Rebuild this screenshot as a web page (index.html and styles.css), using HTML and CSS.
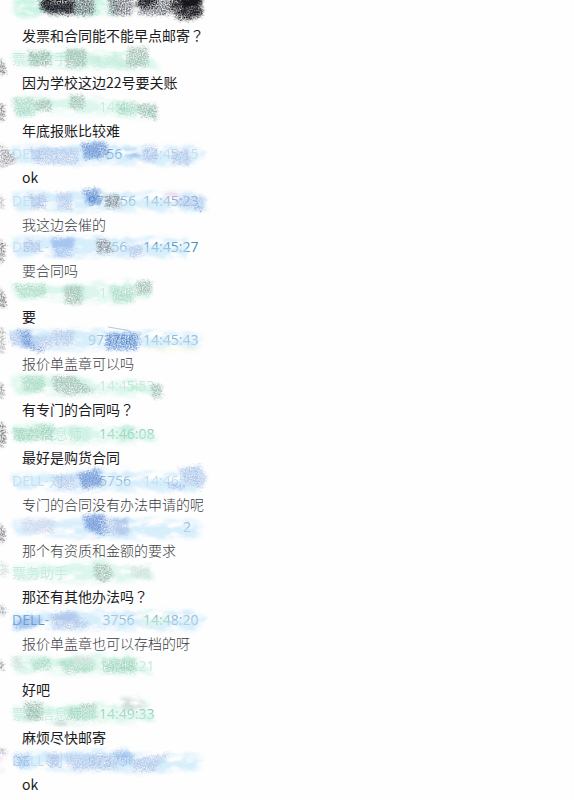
FILE: index.html
```html
<!DOCTYPE html>
<html lang="zh-CN">
<head>
<meta charset="utf-8">
<meta name="viewport" content="width=device-width, initial-scale=1">
<title>聊天记录</title>
<link rel="stylesheet" href="styles.css">
</head>
<body>
<svg class="defs" aria-hidden="true">
  <defs>
    <filter id="wash" x="-10%" y="-30%" width="120%" height="160%" color-interpolation-filters="sRGB">
      <feTurbulence type="fractalNoise" baseFrequency=".06 .12" numOctaves="3" seed="4" result="n"/>
      <feGaussianBlur in="SourceGraphic" stdDeviation="2" result="s"/>
      <feDisplacementMap in="s" in2="n" scale="8" xChannelSelector="R" yChannelSelector="G" result="d"/>
      <feColorMatrix in="n" type="matrix" values="0 0 0 0 0  0 0 0 0 0  0 0 0 0 0  0 0 3 0 -.7" result="a"/>
      <feComposite in="d" in2="a" operator="in"/>
    </filter>
    <filter id="grain" x="-10%" y="-30%" width="120%" height="160%" color-interpolation-filters="sRGB">
      <feTurbulence type="fractalNoise" baseFrequency=".3 .5" numOctaves="2" seed="9" result="n"/>
      <feGaussianBlur in="SourceGraphic" stdDeviation="1.6" result="s"/>
      <feDisplacementMap in="s" in2="n" scale="7" xChannelSelector="R" yChannelSelector="G" result="d"/>
      <feTurbulence type="fractalNoise" baseFrequency=".75" numOctaves="2" seed="3" result="t"/>
      <feColorMatrix in="t" type="matrix" values="0 0 0 0 0  0 0 0 0 0  0 0 0 0 0  2 0 0 0 -.4" result="a"/>
      <feComposite in="d" in2="a" operator="in"/>
    </filter>
  </defs>
</svg>
<main class="log">
  <article class="entry">
    <header class="meta">
      <svg class="smudge dark" viewBox="0 0 210 32" aria-hidden="true">
        <g filter="url(#wash)"><path class="mint" d="M14 2H118V20H14z"/><path class="gray" d="M42 0H72V17H42zM134 0H158V13H134z"/><path class="ink" d="M174 0H200V19H184L172 10z"/></g>
        <g filter="url(#grain)"><path class="gray" d="M74 0H94V19H58zM108 0H132V19H110zM150 0H171V19H138z"/><path class="ink" d="M40 0H74V18H52L40 12zM133 0H157V12H140zM170 0H202V20L190 24H178L170 12z"/></g>
      </svg>
    </header>
    <p class="text">发票和合同能不能早点邮寄<span class="mark" lang="zh-TW">？</span></p>
  </article>
  <article class="entry">
    <header class="meta green">
      <svg class="smudge" viewBox="0 0 210 32" aria-hidden="true">
        <g filter="url(#wash)"><path class="mint" d="M12 9H148L160 24 152 28 30 23 12 20z"/><path class="aqua" d="M64 7H86V25H66zM92 11H122V24H94z"/></g>
        <g filter="url(#grain)"><path class="moss" d="M28 8H50V23H30zM66 6H86V24H66zM128 4H148V24H126z"/><path class="aqua" d="M88 14H126V24H92z"/><path class="ink" d="M0 14L4 22 6 31 0 32z"/></g>
      </svg>
      <span class="name faint">票务信手</span>
    </header>
    <p class="text">因为学校这边22号要关账</p>
  </article>
  <article class="entry spaced">
    <header class="meta green">
      <svg class="smudge" viewBox="0 0 210 32" aria-hidden="true">
        <g filter="url(#wash)"><path class="mint" d="M14 6H54L84 7 138 12 156 16V28L118 25 54 22 16 26z"/></g>
        <g filter="url(#grain)"><path class="jade" d="M12 7H34V25H16zM116 11H136V24H118z"/><path class="moss" d="M34 9H51V20H36zM70 4H84V18H70zM136 13H157V29L140 25z"/><path class="ink" d="M0 13H4V30H0z"/></g>
      </svg>
      <span class="name"></span><time class="faint">14:4</time>
    </header>
    <p class="text">年底报账比较难</p>
  </article>
  <article class="entry">
    <header class="meta blue">
      <svg class="smudge" viewBox="0 0 210 32" aria-hidden="true">
        <g filter="url(#wash)"><path class="sky" d="M10 8H80L108 4 130 8H196L206 18 188 27 60 26 12 24z"/><path class="azure" d="M84 5H106V19H84zM126 12H140V21H126z"/></g>
        <g filter="url(#grain)"><path class="blue" d="M80 5H107L109 19 86 22z"/><path class="peri" d="M30 10H78V26H34zM143 8H157V24H143zM170 12H190V27H172z"/><path class="gray" d="M0 6L12 15 16 24 0 30z"/></g>
      </svg>
      <span class="name faint">DELL-</span><span class="ident strong">&nbsp;&nbsp;&nbsp;&nbsp;&nbsp;56</span><time class="faint">14:45:15</time>
    </header>
    <p class="text">ok</p>
  </article>
  <article class="entry song">
    <header class="meta blue">
      <svg class="smudge" viewBox="0 0 210 32" aria-hidden="true">
        <g filter="url(#wash)"><path class="sky" d="M12 7H190L206 12V26H14z"/><path class="rose" d="M166 5H180V18H166z"/><path class="azure" d="M84 6H100V19H88z"/></g>
        <g filter="url(#grain)"><path class="blue" d="M82 4H98L102 17 88 20zM192 14H203V25H196z"/><path class="peri" d="M28 9H46V24H32zM56 8H72V25H58zM176 11H204V22H180z"/><path class="gray" d="M104 10H120V23H106zM0 11H3V24H0z"/></g>
      </svg>
      <span class="name faint">DELL-</span><span class="ident">973756</span><time>14:45:23</time>
    </header>
    <p class="text">我这边会催的</p>
  </article>
  <article class="entry song">
    <header class="meta blue">
      <svg class="smudge" viewBox="0 0 210 32" aria-hidden="true">
        <g filter="url(#wash)"><path class="sky" d="M12 6H160L188 8V26H14z"/><path class="azure" d="M52 7H72V24H56z"/></g>
        <g filter="url(#grain)"><path class="azure" d="M50 6H74V24L56 26z"/><path class="gray" d="M96 8H108L114 22 98 22z"/><path class="ink" d="M0 9L5 12 3 32 0 32z"/><path class="peri" d="M24 9H40V21H24zM126 14H142V26H130z"/></g>
      </svg>
      <span class="name faint">DELL-</span><span class="ident">&nbsp;&nbsp;3756</span><time class="strong">14:45:27</time>
    </header>
    <p class="text">要合同吗</p>
  </article>
  <article class="entry">
    <header class="meta green">
      <svg class="smudge" viewBox="0 0 210 32" aria-hidden="true">
        <g filter="url(#wash)"><path class="mint" d="M12 9L80 7 140 3 154 8 148 20 122 27 14 21z"/><path class="aqua" d="M64 10H84V24H64z"/></g>
        <g filter="url(#grain)"><path class="jade" d="M12 7H46V20H20zM108 10H134V25H114z"/><path class="moss" d="M64 9H82V27H66zM136 4H152V17H136z"/><path class="ink" d="M0 10L5 20 6 30 0 31z"/></g>
      </svg>
      <span class="name"></span><time class="faint">1</time>
    </header>
    <p class="text">要</p>
  </article>
  <article class="entry song">
    <header class="meta blue">
      <svg class="smudge" viewBox="0 0 210 32" aria-hidden="true">
        <g filter="url(#wash)"><path class="sky" d="M10 6H140L200 10V24L46 26 12 20z"/><path class="cream" d="M142 23H200V28H142z"/><path class="azure" d="M20 9H32V22H20z"/></g>
        <g filter="url(#grain)"><path class="blue" d="M16 6H28L34 20 46 24 40 29 26 23zM106 9H140L138 26H106z"/><path class="peri" d="M8 8H20V22H12zM32 12H52V24H36zM52 6H74V22H54z"/><path class="gray" d="M0 4H4V29H0z"/></g>
        <path class="stroke" d="M108 3L126 6 132 8"/>
      </svg>
      <span class="name"></span><span class="ident">973756</span><time>14:45:43</time>
    </header>
    <p class="text">报价单盖章可以吗</p>
  </article>
  <article class="entry">
    <header class="meta green">
      <svg class="smudge" viewBox="0 0 210 32" aria-hidden="true">
        <g filter="url(#wash)"><path class="mint" d="M10 6H84L96 12H158V25H60L14 24z"/><path class="aqua" d="M28 7H42V20H28zM128 10H142V22H128z"/></g>
        <g filter="url(#grain)"><path class="jade" d="M20 6H44V22H24z"/><path class="moss" d="M52 6H74L84 14 96 22 66 25 54 20zM152 14H162V28H152z"/><path class="ink" d="M0 14H3V28H0z"/></g>
      </svg>
      <span class="name"></span><time class="faint">14:45:53</time>
    </header>
    <p class="text">有专门的合同吗<span class="mark" lang="zh-TW">？</span></p>
  </article>
  <article class="entry spaced">
    <header class="meta green">
      <svg class="smudge" viewBox="0 0 210 32" aria-hidden="true">
        <g filter="url(#wash)"><path class="mint" d="M12 7H56L88 9 156 10V24L78 25 14 22z"/><path class="aqua" d="M120 8H134V22H120z"/></g>
        <g filter="url(#grain)"><path class="jade" d="M12 10H34V23H16zM34 6H54V22H36z"/><path class="aqua" d="M120 8H134V22H120zM68 9H90V24H70z"/><path class="ink" d="M0 5H4L6 22 2 30 0 28z"/></g>
      </svg>
      <span class="name faint">票务信息师</span><time>14:46:08</time>
    </header>
    <p class="text">最好是购货合同</p>
  </article>
  <article class="entry song">
    <header class="meta blue">
      <svg class="smudge" viewBox="0 0 210 32" aria-hidden="true">
        <g filter="url(#wash)"><path class="sky" d="M10 9H76L98 4 164 8 198 3 206 12 198 26 88 26 14 23z"/><path class="azure" d="M80 8H102V20H80z"/></g>
        <g filter="url(#grain)"><path class="blue" d="M76 9L98 3 104 20 84 25z"/><path class="azure" d="M168 18H184V25H168z"/><path class="peri" d="M54 10H76V24H58zM178 3L200 0 207 12 202 24 184 17z"/></g>
      </svg>
      <span class="name faint">DELL-刘</span><span class="ident">&nbsp;&nbsp;&nbsp;5756</span><time class="faint">14:46:23</time>
    </header>
    <p class="text">专门的合同没有办法申请的呢</p>
  </article>
  <article class="entry song">
    <header class="meta blue">
      <svg class="smudge" viewBox="0 0 210 32" aria-hidden="true">
        <g filter="url(#wash)"><path class="sky" d="M12 9H80L100 5 134 7 200 10V26L112 28 14 23z"/><path class="azure" d="M84 5H104V20H88zM116 8H128V22H116z"/></g>
        <g filter="url(#grain)"><path class="blue" d="M82 4H105L110 20 100 25 86 17z"/><path class="lilac" d="M20 8H54V22H24z"/><path class="peri" d="M104 7H128V24H108z"/><path class="ink" d="M0 12L5 20 4 31 0 32z"/></g>
      </svg>
      <span class="name"></span><span class="ident"></span><time>&nbsp;&nbsp;&nbsp;&nbsp;&nbsp;&nbsp;&nbsp;&nbsp;&nbsp;&nbsp;&nbsp;2</time>
    </header>
    <p class="text">那个有资质和金额的要求</p>
  </article>
  <article class="entry">
    <header class="meta green">
      <svg class="smudge" viewBox="0 0 210 32" aria-hidden="true">
        <g filter="url(#wash)"><path class="mint" d="M12 9L80 6 104 2 120 10 154 8V23L100 26 14 22z"/></g>
        <g filter="url(#grain)"><path class="moss" d="M94 7H109L114 18 104 26 94 20z"/><path class="mist" d="M130 10H150V21H134zM0 4L7 7 8 18 0 20z"/></g>
      </svg>
      <span class="name faint">票务助手</span>
    </header>
    <p class="text">那还有其他办法吗<span class="mark" lang="zh-TW">？</span></p>
  </article>
  <article class="entry song">
    <header class="meta blue">
      <svg class="smudge" viewBox="0 0 210 32" aria-hidden="true">
        <g filter="url(#wash)"><path class="sky" d="M12 10L58 8 190 6 206 14 196 26 14 25z"/><path class="mint" d="M142 7H168V20H142z"/><path class="azure" d="M18 13H40V22H18zM58 10H76V21H58z"/></g>
        <g filter="url(#grain)"><path class="azure" d="M12 21L24 12H36L34 22 14 27zM54 12H76V23H58z"/><path class="peri" d="M48 11L68 6 90 20 84 25H54z"/><path class="gray" d="M0 0L6 4 5 10 0 13z"/></g>
      </svg>
      <span class="name strong">DELL-</span><span class="ident">&nbsp;&nbsp;&nbsp;&nbsp;3756</span><time>14:48:20</time>
    </header>
    <p class="text">报价单盖章也可以存档的呀</p>
  </article>
  <article class="entry">
    <header class="meta green">
      <svg class="smudge" viewBox="0 0 210 32" aria-hidden="true">
        <g filter="url(#wash)"><path class="mint" d="M12 7L80 5 134 4 146 14 154 28 130 24 14 23z"/><path class="aqua" d="M60 10H90V22H60zM122 8H134V20H122z"/></g>
        <g filter="url(#grain)"><path class="jade" d="M32 8H50V20H32zM58 10H94V21L66 24zM102 9H136V23H104z"/><path class="mist" d="M12 7H22V19H14zM74 6H92V16H74z"/><path class="ink" d="M0 11H3V20H0z"/></g>
      </svg>
      <span class="name"></span><time class="faint">14:48:21</time>
    </header>
    <p class="text">好吧</p>
  </article>
  <article class="entry spaced">
    <header class="meta green">
      <svg class="smudge" viewBox="0 0 210 32" aria-hidden="true">
        <g filter="url(#wash)"><path class="mint" d="M12 8L90 6 124 4 144 2 154 12V24L60 26 14 22z"/><path class="mist" d="M122 1H142V12H122zM54 22H68V28H54z"/></g>
        <g filter="url(#grain)"><path class="moss" d="M24 4H42V22H26zM80 6H96V16H80z"/><path class="jade" d="M66 9H96V22H68z"/></g>
      </svg>
      <span class="name faint">票务信息师</span><time>14:49:33</time>
    </header>
    <p class="text">麻烦尽快邮寄</p>
  </article>
  <article class="entry">
    <header class="meta blue">
      <svg class="smudge" viewBox="0 0 210 32" aria-hidden="true">
        <g filter="url(#wash)"><path class="sky" d="M12 9L58 6 130 5 150 10 200 9V24L150 28 20 24z"/><path class="azure" d="M118 9H132V18H118z"/><path class="rose" d="M0 5H6L2 28H0z"/></g>
        <g filter="url(#grain)"><path class="azure" d="M14 9H30V22H16zM112 6L126 4 136 16 122 20z"/><path class="peri" d="M46 8H60V22H48zM62 9H116L118 24 72 25zM134 14L170 8 152 28 134 26z"/><path class="gray" d="M0 4H7L2 9H0z"/></g>
      </svg>
      <span class="name faint">DELL-刘</span><span class="ident faint">973756</span>
    </header>
    <p class="text">ok</p>
  </article>
</main>
</body>
</html>
```

FILE: styles.css
```css
body {
  margin: 0;
  background: #fefefe;
  color: #1c1c1e;
  font-family: "Noto Sans CJK SC", "Noto Sans", sans-serif;
  font-size: 14px;
}

.defs {
  position: absolute;
  width: 0;
  height: 0;
}

.log {
  overflow: hidden;
  padding-bottom: 2px;
}

.entry.spaced {
  padding-top: 1px;
}

.meta {
  position: relative;
  display: grid;
  grid-template-columns: 76px 55px 64px;
  height: 24px;
  padding-left: 12px;
  font-family: "Open Sans", "Noto Sans CJK SC", sans-serif;
  line-height: 24px;
  white-space: nowrap;
}

.meta.green {
  grid-template-columns: 87px 64px;
  color: #8cc9b1;
}

.meta.blue {
  color: #86aecb;
}

.meta .faint {
  opacity: 0.45;
}

.meta .strong {
  color: #4f8fc0;
}

.smudge {
  position: absolute;
  z-index: 1;
  top: -4px;
  left: 0;
  width: 210px;
  height: 32px;
  overflow: visible;
  opacity: 0.65;
}

.smudge.dark {
  opacity: 1;
}

.text {
  margin: 0;
  padding-left: 22px;
  line-height: 23px;
}

.mark {
  font-family: "Noto Sans CJK TC", sans-serif;
}

.song .text {
  color: #3c3c3e;
  font-weight: 300;
  line-height: 22px;
}

.mint { fill: #cbf3e4; }
.aqua { fill: #aee8d0; }
.jade { fill: #84c8aa; }
.moss { fill: #759f8e; }
.mist { fill: #b8cfc8; }
.sky { fill: #c3e6fa; }
.azure { fill: #78a8e8; }
.blue { fill: #3168c2; }
.peri { fill: #92aee0; }
.lilac { fill: #bcc4e4; }
.rose { fill: #e6cfe8; }
.cream { fill: #fafbe4; }
.gray { fill: #6c6f78; }
.ink { fill: #17161c; }

.stroke {
  fill: none;
  stroke: #8fa9c4;
}
```
